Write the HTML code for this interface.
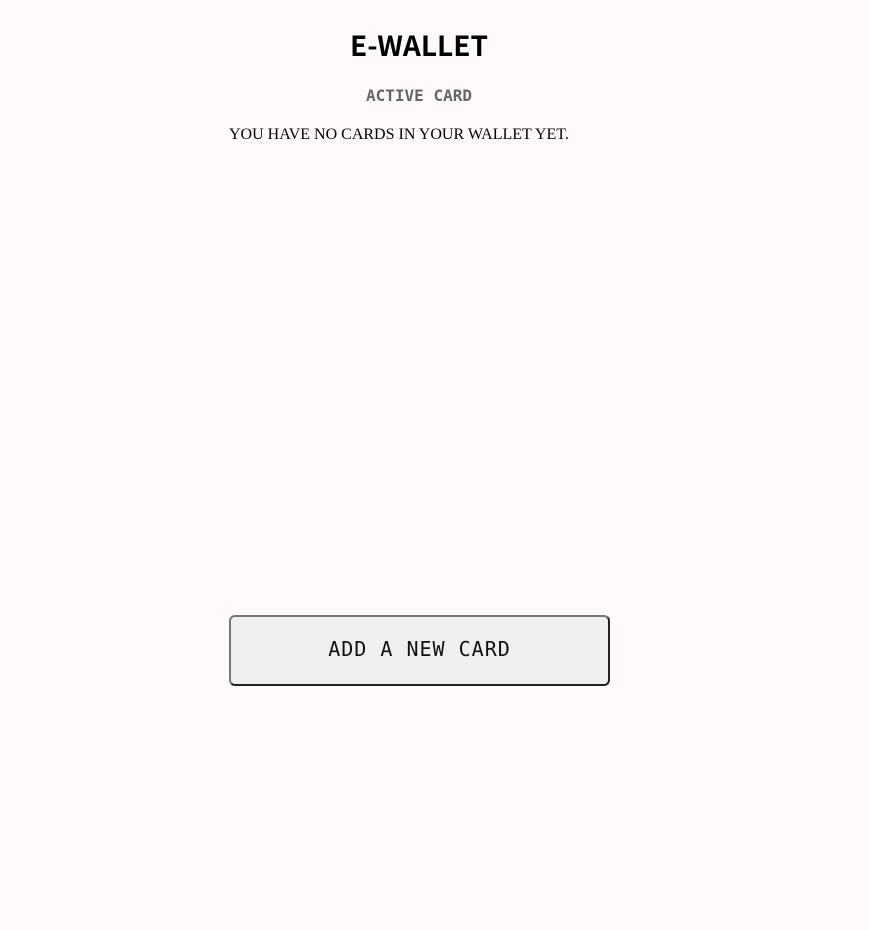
<!DOCTYPE html>
<html><head><meta charset="utf-8"><style>
html,body{margin:0;padding:0;background:#fffaf9;width:869px;height:930px;overflow:hidden}
h1{position:absolute;left:229px;width:380px;top:26px;margin:0;text-align:center;font:bold 28px "Noto Sans CJK JP","DejaVu Sans",sans-serif;color:#000;line-height:38px}
h2{position:absolute;left:229px;width:380px;top:86px;margin:0;text-align:center;font:bold 16px "DejaVu Sans Mono","Liberation Mono",monospace;color:#666;line-height:20px}
p{position:absolute;left:229px;top:126px;margin:0;font:16px "Liberation Serif",serif;color:#000;line-height:18px}
button{position:absolute;left:229px;top:615px;width:381px;height:71px;box-sizing:border-box;background:#efefef;border:2px solid;border-color:#777 #222 #222 #777;border-radius:6px;font:20px "DejaVu Sans Mono","Liberation Mono",monospace;color:#111;letter-spacing:1px;padding:0 0 4px 0}
</style></head><body>
<h1>E-WALLET</h1>
<h2>ACTIVE CARD</h2>
<p>YOU HAVE NO CARDS IN YOUR WALLET YET.</p>
<button>ADD A NEW CARD</button>
</body></html>
